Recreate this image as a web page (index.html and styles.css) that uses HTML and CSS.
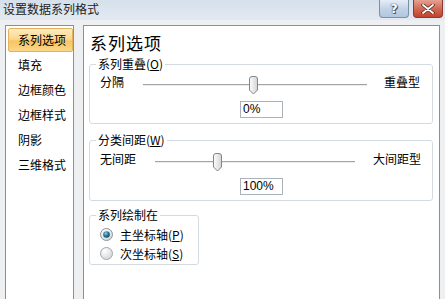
FILE: index.html
```html
<!DOCTYPE html>
<html lang="zh-CN">
<head>
<meta charset="utf-8">
<title>设置数据系列格式</title>
<link rel="stylesheet" href="styles.css">
</head>
<body>
<div class="window">
  <div class="titlebar">
    <span class="title">设置数据系列格式</span>
    <div class="ctrls">
      <span class="btn help">?</span>
      <span class="btn close">
        <svg width="14" height="10" viewBox="0 0 14 10"><path d="M2 1 L12 9 M12 1 L2 9" stroke="#5a2a22" stroke-width="3.4" stroke-linecap="round"/><path d="M2 1 L12 9 M12 1 L2 9" stroke="#fff" stroke-width="1.8" stroke-linecap="round"/></svg>
      </span>
    </div>
  </div>
  <div class="main">
    <ul class="nav">
      <li class="active">系列选项</li>
      <li>填充</li>
      <li>边框颜色</li>
      <li>边框样式</li>
      <li>阴影</li>
      <li>三维格式</li>
    </ul>
    <div class="panel">
      <h1 class="heading">系列选项</h1>
      <fieldset class="group g1">
        <legend>系列重叠(<u>O</u>)</legend>
        <div class="row r1">
          <span class="lbl">分隔</span>
          <div class="track"><span class="line"></span>
            <svg class="thumb t1" width="11" height="19" viewBox="0 0 11 19"><defs><linearGradient id="tg" x1="0" x2="1"><stop offset="0" stop-color="#fdfdfd"/><stop offset="1" stop-color="#d4d4d4"/></linearGradient></defs><path d="M1.5 3 Q1.5 0.5 4 0.5 L7 0.5 Q9.5 0.5 9.5 3 L9.5 14 L5.5 18 L1.5 14 Z" fill="url(#tg)" stroke="#7b8792"/></svg>
          </div>
          <span class="lbl right">重叠型</span>
        </div>
        <div class="input">0%</div>
      </fieldset>
      <fieldset class="group g2">
        <legend>分类间距(<u>W</u>)</legend>
        <div class="row r2">
          <span class="lbl">无间距</span>
          <div class="track"><span class="line"></span>
            <svg class="thumb t2" width="11" height="19" viewBox="0 0 11 19"><path d="M1.5 3 Q1.5 0.5 4 0.5 L7 0.5 Q9.5 0.5 9.5 3 L9.5 14 L5.5 18 L1.5 14 Z" fill="url(#tg)" stroke="#7b8792"/></svg>
          </div>
          <span class="lbl right">大间距型</span>
        </div>
        <div class="input">100%</div>
      </fieldset>
      <fieldset class="group g3">
        <legend>系列绘制在</legend>
        <div class="radio">
          <svg width="13" height="13" viewBox="0 0 13 13"><defs><radialGradient id="rg" cx="0.35" cy="0.3" r="0.8"><stop offset="0" stop-color="#ffffff"/><stop offset="1" stop-color="#cfd3d6"/></radialGradient><radialGradient id="dg" cx="0.4" cy="0.35" r="0.7"><stop offset="0" stop-color="#8fd0ec"/><stop offset="0.5" stop-color="#2a7aa0"/><stop offset="1" stop-color="#0f3f58"/></radialGradient></defs><circle cx="6.5" cy="6.5" r="6" fill="url(#rg)" stroke="#8e9499"/><circle cx="6.5" cy="6.5" r="3.3" fill="url(#dg)"/></svg>
          <span>主坐标轴(<u>P</u>)</span>
        </div>
        <div class="radio">
          <svg width="13" height="13" viewBox="0 0 13 13"><circle cx="6.5" cy="6.5" r="6" fill="url(#rg)" stroke="#a2a7ab"/></svg>
          <span>次坐标轴(<u>S</u>)</span>
        </div>
      </fieldset>
    </div>
  </div>
</div>
</body>
</html>
```
FILE: styles.css
```css
html, body {
  margin: 0;
  height: 299px;
  overflow: hidden;
}
body {
  width: 445px;
  background: #eeeff1;
  font: 12px "Noto Sans CJK SC", "Noto Sans", sans-serif;
  color: #000;
}
.window {
  height: 299px;
  display: flex;
  flex-direction: column;
}
.titlebar {
  height: 20px;
  flex: none;
  display: flex;
  align-items: flex-start;
  background: linear-gradient(#d5e0ec, #e3e9f1);
}
.title {
  padding: 2px 0 0 3px;
  line-height: 14px;
  color: #222;
}
.ctrls {
  margin-left: auto;
  margin-right: 2px;
  display: flex;
  gap: 4px;
}
.btn {
  box-sizing: border-box;
  height: 18px;
  display: flex;
  align-items: center;
  justify-content: center;
  border-radius: 0 0 4px 4px;
  border: 1px solid #7d8ea6;
  border-top: none;
}
.help {
  width: 30px;
  background: linear-gradient(#e6eef7, #c3d3e6 50%, #b2c6dd);
  color: #fff;
  font: bold 13px "DejaVu Sans", sans-serif;
  text-shadow: 0 0 1px #2c3e58, 0 0 1px #2c3e58, 1px 1px 0 #44566e;
}
.close {
  width: 30px;
  background: linear-gradient(#e6a092, #d26a55 50%, #c1432d);
  border-color: #8a3a2f;
}
.main {
  flex: 1;
  display: flex;
  padding-top: 5px;
  min-height: 0;
}
.nav {
  list-style: none;
  margin: 0 0 0 5px;
  padding: 2px 0 0;
  width: 67px;
  flex: none;
  background: #fff;
  border: 1px solid #8d8f91;
  border-bottom: none;
}
.nav li {
  margin: 0 0 0 2px;
  height: 22px;
  line-height: 22px;
  padding-left: 9px;
  border: 1px solid transparent;
  border-radius: 2px;
  white-space: nowrap;
}
.nav li + li {
  margin-top: 1px;
}
.nav li.active {
  background: linear-gradient(#fdebbf, #fbd891 45%, #f8c460 55%, #fbd68a);
  border-color: #e2b35a;
}
.panel {
  margin-left: 9px;
  width: 355px;
  flex: none;
  background: #fff;
  border: 1px solid #8d8f91;
  border-bottom: none;
}
.heading {
  margin: 0;
  padding: 8px 0 0 6px;
  font-size: 17px;
  letter-spacing: 1px;
  font-weight: normal;
  line-height: 17px;
}
.group {
  margin: 0 6px 0 5px;
  padding: 0;
  border: 1px solid #d3dbe1;
  border-radius: 3px;
  min-width: 0;
}
.group legend {
  margin-left: 6px;
  padding: 0 2px;
  line-height: 12px;
}
.group u {
  text-decoration: underline;
}
.g1 {
  margin-top: 7px;
  padding-bottom: 5px;
}
.g1 .row {
  margin-top: 5px;
}
.g2 {
  margin-top: 10px;
  padding-bottom: 5px;
}
.g3 {
  margin-top: 8px;
  width: 108px;
  padding-bottom: 1px;
}
.row {
  display: flex;
  align-items: center;
  height: 20px;
  margin-top: 6px;
  padding-left: 10px;
}
.lbl {
  margin-bottom: 7px;
  line-height: 14px;
}
.r1 .lbl:first-child { width: 43px; }
.r1 .track { width: 224px; }
.r1 .right { margin-left: 17px; }
.r2 .lbl:first-child { width: 55px; }
.r2 .track { width: 200px; }
.r2 .right { margin-left: 18px; }
.track {
  position: relative;
  height: 20px;
}
.line {
  display: block;
  margin-top: 9px;
  height: 1px;
  background: #a4a4a4;
  border-bottom: 1px solid #ececec;
}
.thumb {
  position: absolute;
  top: 1px;
}
.t1 { left: 105px; }
.t2 { left: 57px; }
.input {
  box-sizing: border-box;
  margin: 6px 0 0 150px;
  width: 43px;
  height: 17px;
  border: 1px solid #abb3ba;
  padding-left: 2px;
  line-height: 15px;
  font-family: "Liberation Sans", sans-serif;
  font-size: 12px;
}
.radio {
  display: flex;
  align-items: center;
  height: 19px;
  padding-left: 10px;
  gap: 7px;
}
.radio:first-of-type {
  margin-top: 4px;
}
```
